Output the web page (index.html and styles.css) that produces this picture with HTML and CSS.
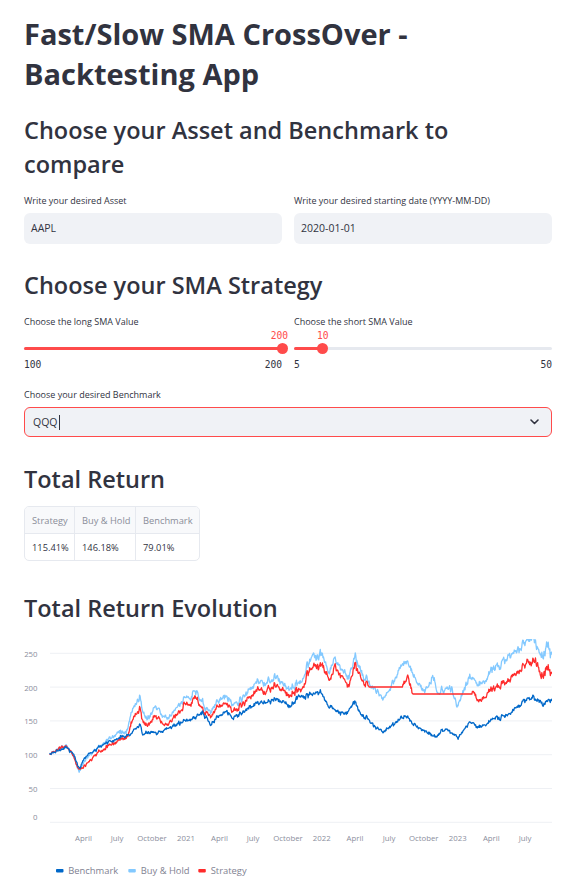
FILE: index.html
```html
<!DOCTYPE html>
<html lang="en">
<head>
<meta charset="utf-8">
<title>Fast/Slow SMA CrossOver - Backtesting App</title>
<link rel="stylesheet" href="styles.css">
</head>
<body>
<main class="page">
  <h1 class="title">Fast/Slow SMA CrossOver -<br>Backtesting App</h1>

  <h2 class="heading h-first">Choose your Asset and Benchmark to<br>compare</h2>

  <section class="row two">
    <div class="field">
      <label class="lbl">Write your desired Asset</label>
      <div class="input">AAPL</div>
    </div>
    <div class="field">
      <label class="lbl">Write your desired starting date (YYYY-MM-DD)</label>
      <div class="input">2020-01-01</div>
    </div>
  </section>

  <h2 class="heading h-sma">Choose your SMA Strategy</h2>

  <section class="row two sliders">
    <div class="field">
      <label class="lbl">Choose the long SMA Value</label>
      <div class="slider" style="--p: 100%">
        <div class="val-row"><span class="val val-end">200</span></div>
        <div class="track"><div class="fill"></div><div class="thumb"></div></div>
        <div class="ticks"><span>100</span><span>200</span></div>
      </div>
    </div>
    <div class="field">
      <label class="lbl">Choose the short SMA Value</label>
      <div class="slider" style="--p: 11.11%">
        <div class="val-row"><span class="val">10</span></div>
        <div class="track"><div class="fill"></div><div class="thumb"></div></div>
        <div class="ticks"><span>5</span><span>50</span></div>
      </div>
    </div>
  </section>

  <section class="field bench">
    <label class="lbl">Choose your desired Benchmark</label>
    <div class="select">
      <span class="sel-val">QQQ</span><span class="cursor"></span>
      <svg class="chev" width="9" height="6" viewBox="0 0 9 6"><path d="M1 1 L4.5 4.5 L8 1" fill="none" stroke="#31333f" stroke-width="1.6" stroke-linecap="round" stroke-linejoin="round"/></svg>
    </div>
  </section>

  <h2 class="heading h-total">Total Return</h2>

  <table class="tbl">
    <thead>
      <tr><th>Strategy</th><th>Buy &amp; Hold</th><th>Benchmark</th></tr>
    </thead>
    <tbody>
      <tr><td>115.41%</td><td>146.18%</td><td>79.01%</td></tr>
    </tbody>
  </table>

  <h2 class="heading h-evo">Total Return Evolution</h2>

  <div class="chart">
    <svg id="chart" width="528" height="249" viewBox="0 0 528 249">
      <g class="grid">
        <line x1="26" x2="528" y1="14.3" y2="14.3"/>
        <line x1="26" x2="528" y1="48.1" y2="48.1"/>
        <line x1="26" x2="528" y1="81.9" y2="81.9"/>
        <line x1="26" x2="528" y1="115.7" y2="115.7"/>
        <line x1="26" x2="528" y1="149.5" y2="149.5"/>
        <line x1="26" x2="528" y1="183.3" y2="183.3"/>
      </g>
      <g class="ylab">
        <text x="13.5" y="18">250</text>
        <text x="13.5" y="51.5">200</text>
        <text x="13.5" y="85.3">150</text>
        <text x="13.5" y="119">100</text>
        <text x="13.5" y="152.8">50</text>
        <text x="13.5" y="181">0</text>
      </g>
      <g id="lines"></g>
      <g class="xlab">
        <text x="59.5" y="202">April</text>
        <text x="93" y="202">July</text>
        <text x="128" y="202">October</text>
        <text x="162" y="202">2021</text>
        <text x="195.5" y="202">April</text>
        <text x="229" y="202">July</text>
        <text x="264" y="202">October</text>
        <text x="297.7" y="202">2022</text>
        <text x="331" y="202">April</text>
        <text x="365" y="202">July</text>
        <text x="399.7" y="202">October</text>
        <text x="433.7" y="202">2023</text>
        <text x="467.3" y="202">April</text>
        <text x="501" y="202">July</text>
      </g>
      <g class="legend">
        <rect x="32" y="230" width="7.5" height="3.4" rx="0.8" fill="#0068c9"/>
        <text x="44.3" y="235">Benchmark</text>
        <rect x="104.3" y="230" width="7.5" height="3.4" rx="0.8" fill="#83c9ff"/>
        <text x="116.7" y="235">Buy &amp; Hold</text>
        <rect x="174.3" y="230" width="7.5" height="3.4" rx="0.8" fill="#ff2b2b"/>
        <text x="186.7" y="235">Strategy</text>
      </g>
    </svg>
  </div>
</main>
<script src="script.js"></script>
</body>
</html>
```

FILE: styles.css
```css
* { box-sizing: border-box; }

body {
  margin: 0;
  background: #ffffff;
  color: #31333f;
  font-family: "Open Sans", "Noto Sans", sans-serif;
}

.page {
  padding: 0 17px 0 24px;
  width: 569px;
}

.title {
  margin: 14px 0 0;
  font-size: 29px;
  font-weight: 700;
  line-height: 40px;
  color: #31333f;
}

.heading {
  margin: 0;
  font-size: 23.5px;
  font-weight: 600;
  line-height: 34px;
  color: #31333f;
}

.h-first { margin-top: 19.4px; }
.h-sma { margin-top: 24.4px; }
.h-total { margin-top: 24.5px; }
.h-evo { margin-top: 29.5px; }

.row.two {
  display: grid;
  grid-template-columns: 1fr 1fr;
  column-gap: 12px;
  margin-top: 12.6px;
}

.field {
  display: flex;
  flex-direction: column;
  min-width: 0;
}

.lbl {
  display: block;
  font-size: 9px;
  line-height: 14px;
  height: 14px;
  color: #31333f;
  white-space: nowrap;
}

.input {
  margin-top: 5px;
  height: 31px;
  border-radius: 6px;
  background: #f0f2f6;
  padding: 0 7px;
  display: flex;
  align-items: center;
  font-size: 10.5px;
  color: #31333f;
}

.sliders { margin-top: 11.3px; }

.slider {
  position: relative;
}

.val-row {
  position: relative;
  height: 14px;
}

.val {
  position: absolute;
  left: var(--p);
  transform: translateX(-50%);
  top: 0;
  font-family: "DejaVu Sans Mono", "Liberation Mono", monospace;
  font-size: 9.6px;
  line-height: 14px;
  color: #ff4b4b;
}

.val-end {
  left: auto;
  right: -6px;
  transform: none;
}

.track {
  position: relative;
  height: 12px;
}

.track::before {
  content: "";
  position: absolute;
  left: 0;
  right: 0;
  top: 4.5px;
  height: 3px;
  border-radius: 2px;
  background: #e6e9ef;
}

.fill {
  position: absolute;
  left: 0;
  width: var(--p);
  top: 4.5px;
  height: 3px;
  border-radius: 2px;
  background: #ff4b4b;
}

.thumb {
  position: absolute;
  left: var(--p);
  top: 0.5px;
  width: 11px;
  height: 11px;
  margin-left: -5.5px;
  border-radius: 50%;
  background: #ff4b4b;
}

.ticks {
  margin-top: 3.5px;
  height: 14px;
  display: flex;
  justify-content: space-between;
  font-family: "DejaVu Sans Mono", "Liberation Mono", monospace;
  font-size: 9.6px;
  line-height: 14px;
  color: #31333f;
}

.bench { margin-top: 16px; }

.select {
  margin-top: 5px;
  height: 30px;
  border: 1px solid #ff4b4b;
  border-radius: 6px;
  background: #f0f2f6;
  display: flex;
  align-items: center;
  padding: 0 12px 0 8px;
}

.sel-val {
  font-size: 10.5px;
  color: #31333f;
}

.cursor {
  width: 1px;
  height: 15px;
  margin-left: 1px;
  background: #31333f;
}

.chev {
  margin-left: auto;
}

.tbl {
  margin-top: 10.5px;
  table-layout: fixed;
  width: 176px;
  border-collapse: separate;
  border-spacing: 0;
  border: 1px solid #e6e9ef;
  border-radius: 5px;
  overflow: hidden;
  font-size: 9.3px;
}

.tbl th,
.tbl td {
  height: 26.5px;
  padding: 0 0 0 7px;
  text-align: left;
  white-space: nowrap;
  overflow: hidden;
  border-right: 1px solid #e6e9ef;
}

.tbl th:last-child,
.tbl td:last-child { border-right: none; }

.tbl th {
  font-weight: 400;
  color: #8a8d99;
  background: #f8f9fb;
  border-bottom: 1px solid #e6e9ef;
}

.tbl th:nth-child(1) { width: 50px; }
.tbl th:nth-child(2) { width: 61px; }
.tbl th:nth-child(3) { width: 63px; }

.tbl td { color: #31333f; }

.chart {
  margin-top: 14.5px;
  height: 249px;
}

.chart svg { display: block; }

.grid line {
  stroke: #eef0f4;
  stroke-width: 1;
}

.ylab text {
  font-family: "Open Sans", sans-serif;
  font-size: 7.8px;
  fill: #8a8d9c;
  text-anchor: end;
}

.xlab text {
  font-family: "Open Sans", sans-serif;
  font-size: 7.8px;
  fill: #8a8d9c;
  text-anchor: middle;
}

.legend text {
  font-family: "Open Sans", sans-serif;
  font-size: 9.4px;
  fill: #7f8292;
}

.series {
  fill: none;
  stroke-width: 1.3;
  stroke-linejoin: round;
  stroke-linecap: round;
}
```

FILE: script.js
```js
(function () {
  var NS = "http://www.w3.org/2000/svg";
  var OX = 24, OY = 640;

  function rng(seed) {
    return function () {
      seed |= 0; seed = seed + 0x6D2B79F5 | 0;
      var t = Math.imul(seed ^ seed >>> 15, 1 | seed);
      t = t + Math.imul(t ^ t >>> 7, 61 | t) ^ t;
      return ((t ^ t >>> 14) >>> 0) / 4294967296;
    };
  }

  function interp(a, x) {
    for (var i = 1; i < a.length; i++) {
      if (x <= a[i][0]) {
        var x0 = a[i - 1][0], y0 = a[i - 1][1], x1 = a[i][0], y1 = a[i][1];
        var t = (x - x0) / (x1 - x0);
        return y0 + (y1 - y0) * t;
      }
    }
    return a[a.length - 1][1];
  }

  var bench = [[50,755],[57,752],[62,750],[66,748],[70,752],[74,756],[77,765],[80,770],[83,762],[88,755],[95,752],[102,747],[110,743],[118,740],[127,737],[133,733],[140,726],[143,735],[150,733],[156,735],[160,733],[167,729],[175,726],[187,721],[195,719],[203,714],[207,718],[210,726],[214,722],[220,716],[227,713],[233,719],[240,714],[253,706],[265,703],[277,700],[284,704],[290,708],[296,700],[300,696],[306,698],[312,696],[320,693],[325,700],[330,708],[337,712],[346,716],[351,708],[355,703],[360,712],[367,720],[374,727],[383,733],[392,726],[400,720],[405,716],[412,724],[420,730],[428,734],[436,738],[441,733],[447,730],[452,734],[458,738],[464,731],[470,723],[475,727],[480,728],[487,724],[493,720],[503,717],[510,714],[516,709],[520,705],[527,701],[533,698],[538,702],[543,705],[548,701],[552,700]];

  var hold = [[50,755],[57,751],[62,748],[66,746],[70,752],[74,758],[77,768],[80,773],[83,765],[88,757],[95,752],[102,746],[110,740],[118,734],[125,735],[128,730],[131,714],[136,705],[140,697],[143,712],[147,720],[152,713],[157,708],[162,716],[167,718],[175,711],[182,704],[187,697],[192,698],[195,690],[200,700],[205,708],[210,713],[216,705],[222,699],[227,698],[233,706],[240,701],[248,692],[257,683],[265,684],[272,680],[277,678],[283,686],[290,691],[296,684],[303,680],[308,667],[313,656],[318,660],[322,653],[326,665],[330,673],[335,660],[340,668],[348,680],[352,670],[355,657],[360,668],[368,683],[375,690],[383,700],[390,690],[396,678],[402,665],[405,660],[410,670],[416,682],[423,693],[428,688],[433,678],[438,695],[444,692],[450,686],[454,697],[457,706],[460,700],[465,688],[470,677],[475,683],[480,685],[487,678],[497,667],[505,660],[513,653],[520,648],[527,644],[533,638],[536,645],[540,656],[544,652],[548,645],[552,655]];

  var strat = [[50,755],[57,751],[62,748],[66,746],[70,752],[74,758],[77,768],[80,770],[84,768],[88,763],[95,757],[100,753],[108,748],[118,742],[125,740],[128,738],[131,724],[136,716],[140,709],[143,722],[147,727],[152,721],[157,718],[162,724],[167,725],[175,717],[182,710],[187,704],[192,704],[195,697],[200,706],[205,713],[210,717],[216,710],[222,706],[227,705],[233,712],[240,707],[248,699],[257,691],[265,692],[272,688],[277,685],[283,693],[290,697],[296,691],[303,688],[308,676],[313,666],[318,668],[322,664],[326,673],[330,681],[335,668],[340,675],[348,689],[352,678],[355,665],[360,675],[366,686],[369,688],[402,688],[405,681],[408,680],[411,690],[413,695],[472,695],[476,698],[480,702],[487,694],[497,688],[505,683],[513,677],[520,670],[527,666],[535,661],[538,667],[540,677],[544,672],[548,667],[552,675]];

  var flats = [[369, 402], [413, 472]];

  var step = 0.53;
  var xs = [];
  for (var x = 50; x <= 552.01; x += step) xs.push(x);

  var rc = rng(11);
  function gauss(r) { var u = 0; for (var i = 0; i < 4; i++) u += r(); return (u - 2) * 1.7; }
  var c = 0;
  var common = xs.map(function () { c = 0.55 * c + gauss(rc) * 1.05; return c; });

  function series(anchors, k, seed, flat) {
    var rr = rng(seed), e = 0;
    return xs.map(function (x, i) {
      var base = interp(anchors, x);
      if (flat) {
        for (var j = 0; j < flat.length; j++) {
          if (x >= flat[j][0] && x <= flat[j][1]) { e = 0; return [x, base]; }
        }
      }
      e = 0.35 * e + (rr() - 0.5) * 2.4;
      var vol = 0.55 + Math.max(0, (760 - base)) / 105;
      return [x, base + (common[i] * k + e) * vol];
    });
  }

  function draw(pts, color) {
    var p = document.createElementNS(NS, "polyline");
    p.setAttribute("class", "series");
    p.setAttribute("stroke", color);
    p.setAttribute("points", pts.map(function (q) {
      return (q[0] - OX).toFixed(2) + "," + (q[1] - OY).toFixed(2);
    }).join(" "));
    document.getElementById("lines").appendChild(p);
  }

  draw(series(hold, 1.15, 21), "#83c9ff");
  draw(series(strat, 1.1, 33, flats), "#ff2b2b");
  draw(series(bench, 0.8, 45), "#0068c9");
})();
```
